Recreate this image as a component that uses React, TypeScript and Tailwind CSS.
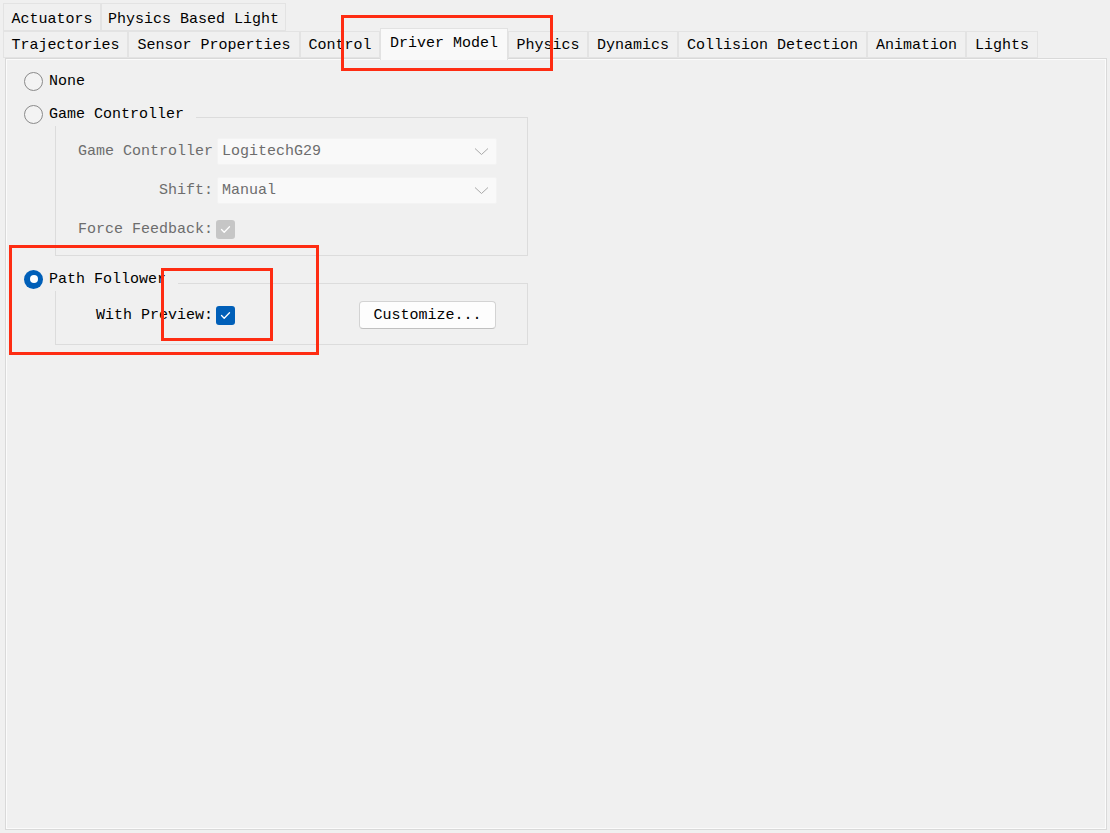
import React from "react";

const font = { fontFamily: '"Liberation Mono", "DejaVu Sans Mono", monospace' };

function Tab({ label, w, selected, top }: { label: string; w: number; selected?: boolean; top?: boolean }) {
  if (selected) {
    return (
      <div
        className="relative z-10 -mt-[3px] h-[32px] flex items-center justify-center bg-[#f9f9f9] border border-b-0 border-[#e2e2e2] text-black shrink-0"
        style={{ width: w }}
      >
        <span className="-mt-[3px]">{label}</span>
      </div>
    );
  }
  return (
    <div
      className="h-full flex items-center justify-center bg-[#f0f0f0] border border-[#e3e3e3] text-black shrink-0"
      style={{ width: w }}
    >
      <span className={top ? "mt-[4px]" : "mt-[2px]"}>{label}</span>
    </div>
  );
}

function Radio({ checked }: { checked?: boolean }) {
  if (checked) {
    return (
      <div className="w-[19px] h-[19px] rounded-full bg-[#005fb8] flex items-center justify-center shrink-0">
        <div className="w-[8px] h-[8px] rounded-full bg-white" />
      </div>
    );
  }
  return <div className="w-[19px] h-[19px] rounded-full border border-[#8a8a8a] bg-[#f3f3f3] shrink-0" />;
}

function Check({ disabled }: { disabled?: boolean }) {
  return (
    <div
      className={
        "w-[19px] h-[19px] rounded-[3px] flex items-center justify-center shrink-0 " +
        (disabled ? "bg-[#c6c6c6]" : "bg-[#005fb8]")
      }
    >
      <svg width="11" height="9" viewBox="0 0 11 9" fill="none">
        <path d="M1.5 4.5 L4.2 7.2 L9.5 1.8" stroke="white" strokeWidth="1.3" strokeLinecap="round" strokeLinejoin="round" />
      </svg>
    </div>
  );
}

function Combo({ value }: { value: string }) {
  return (
    <div className="w-[280px] h-[27px] bg-[#f9f9f9] border border-[#f3f3f3] rounded-[2px] flex items-center pl-[4px] pr-[7px] text-[#6d6d6d]">
      <span className="flex-1">{value}</span>
      <svg width="15" height="9" viewBox="0 0 15 9" fill="none">
        <path d="M1 1.5 L7.5 7.5 L14 1.5" stroke="#a9a9a9" strokeWidth="1" />
      </svg>
    </div>
  );
}

export default function App() {
  return (
    <div className="relative w-[1110px] h-[833px] bg-[#f0f0f0] overflow-hidden text-[15px] leading-none" style={font}>
      {/* tabs */}
      <div className="pl-[3px] pt-[3px]">
        <div className="flex h-[28px]">
          <Tab label="Actuators" w={98} top />
          <Tab label="Physics Based Light" w={185} top />
        </div>
        <div className="flex h-[27px]">
          <Tab label="Trajectories" w={125} />
          <Tab label="Sensor Properties" w={172} />
          <Tab label="Control" w={80} />
          <Tab label="Driver Model" w={128} selected />
          <Tab label="Physics" w={80} />
          <Tab label="Dynamics" w={90} />
          <Tab label="Collision Detection" w={189} />
          <Tab label="Animation" w={99} />
          <Tab label="Lights" w={72} />
        </div>
      </div>

      {/* panel */}
      <div className="ml-[5px] w-[1102px] h-[772px] border border-[#d9d9d9]">
        <div className="w-full h-full border border-[#fbfbfb] bg-[#f0f0f0] pt-[10px]">
          {/* None */}
          <div className="flex items-center h-[22px] pl-[17px] gap-[6px] text-black">
            <Radio />
            <span className="mt-[1px]">None</span>
          </div>

          {/* Game Controller */}
          <div className="mt-[10px] relative z-10 flex items-center h-[24px] pl-[17px] pr-[12px] gap-[6px] bg-[#f0f0f0] w-fit text-black">
            <Radio />
            <span className="mt-[1px]">Game Controller</span>
          </div>
          <div className="-mt-[9px] ml-[48px] w-[473px] border border-[#dcdcdc] pt-[20px] pb-[12px] flex flex-col gap-[12px]">
            <div className="flex items-center h-[27px]">
              <span className="w-[157px] text-right text-[#6d6d6d]">Game Controller</span>
              <div className="ml-[4px]">
                <Combo value="LogitechG29" />
              </div>
            </div>
            <div className="flex items-center h-[27px]">
              <span className="w-[157px] text-right text-[#6d6d6d]">Shift:</span>
              <div className="ml-[4px]">
                <Combo value="Manual" />
              </div>
            </div>
            <div className="flex items-center h-[27px]">
              <span className="w-[157px] text-right text-[#6d6d6d]">Force Feedback:</span>
              <div className="ml-[3px]">
                <Check disabled />
              </div>
            </div>
          </div>

          {/* Path Follower */}
          <div className="mt-[11px] relative z-10 flex items-center h-[24px] pl-[17px] pr-[12px] gap-[6px] bg-[#f0f0f0] w-fit text-black">
            <Radio checked />
            <span className="mt-[1px]">Path Follower</span>
          </div>
          <div className="-mt-[8px] ml-[48px] w-[473px] border border-[#dcdcdc] pt-[17px] pb-[15px]">
            <div className="flex items-center h-[28px]">
              <span className="w-[157px] text-right text-black">With Preview:</span>
              <div className="ml-[3px]">
                <Check />
              </div>
              <button className="ml-[124px] w-[137px] h-[28px] bg-[#fdfdfd] border border-[#d3d3d3] border-b-[#c0c0c0] rounded-[4px] text-black flex items-center justify-center">
                Customize...
              </button>
            </div>
          </div>
        </div>
      </div>

      {/* red annotation boxes */}
      <div className="absolute z-20 left-[341px] top-[15px] w-[212px] h-[56px] border-[3px] border-[#fe2c12] pointer-events-none" />
      <div className="absolute z-20 left-[9px] top-[245px] w-[310px] h-[110px] border-[3px] border-[#fe2c12] pointer-events-none" />
      <div className="absolute z-20 left-[161px] top-[268px] w-[112px] h-[73px] border-[3px] border-[#fe2c12] pointer-events-none" />
    </div>
  );
}
